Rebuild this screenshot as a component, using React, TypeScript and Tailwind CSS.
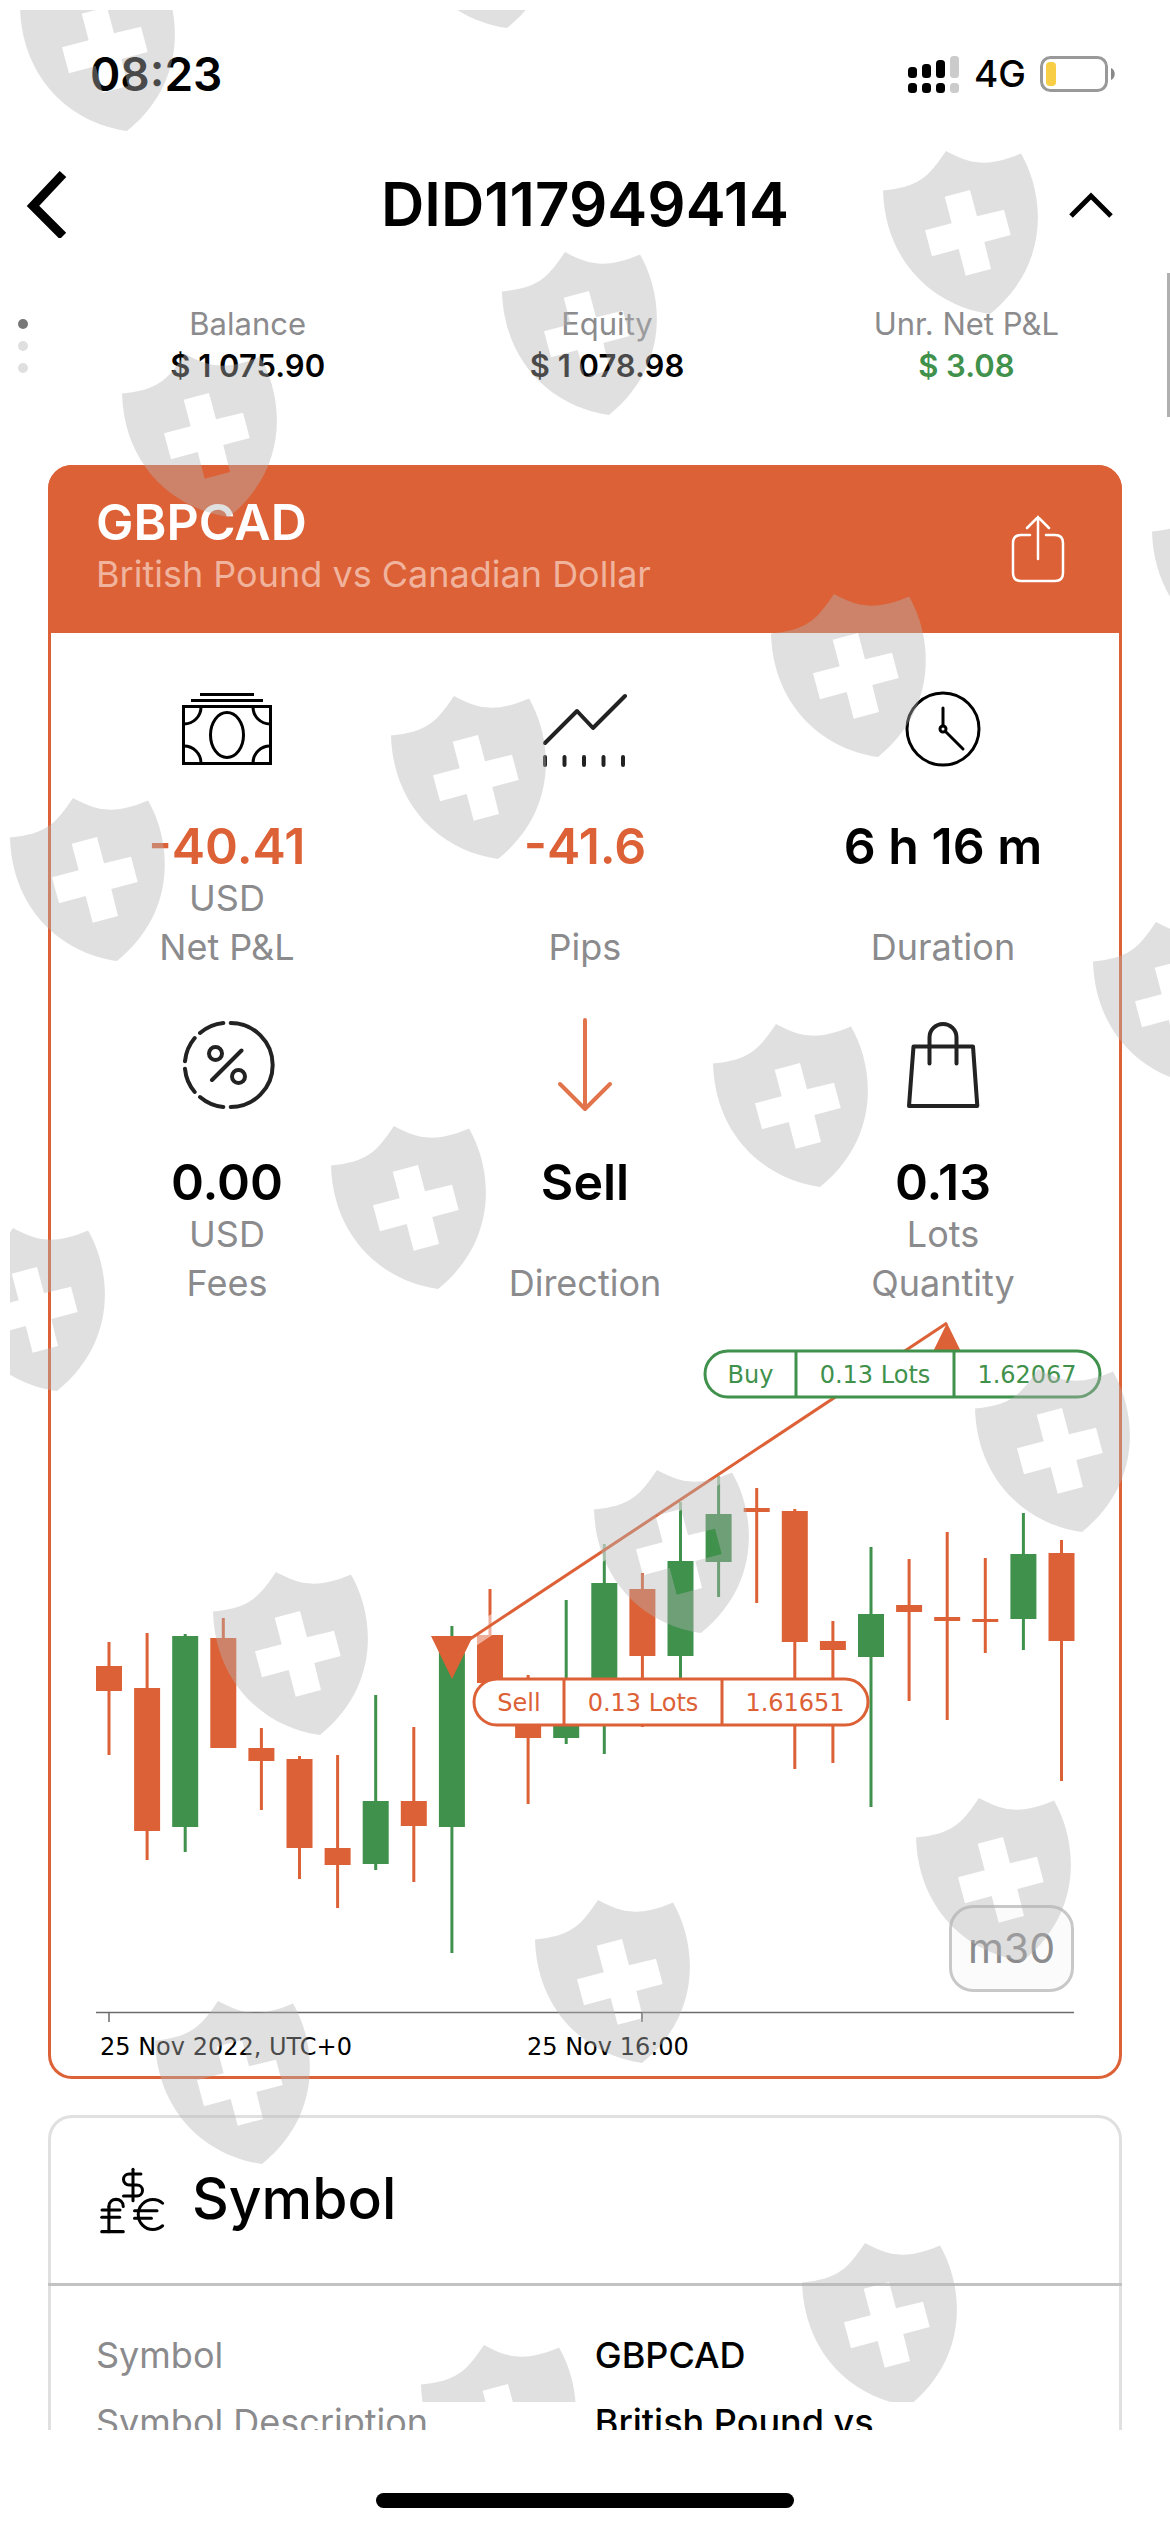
import type { ReactNode } from "react";
import { DollarSign, Euro, PoundSterling } from "lucide-react";

const RED = "#dd6136";
const GREEN = "#3f914c";

const accountFigures = [
  { label: "Balance", value: "$ 1 075.90", color: "text-black" },
  { label: "Equity", value: "$ 1 078.98", color: "text-black" },
  { label: "Unr. Net P&L", value: "$ 3.08", color: "text-[#3f914c]" },
];

// [high, body top, body bottom, low, rising]
const candles: [number, number, number, number, boolean][] = [
  [334, 358, 383, 447, false],
  [325, 380, 523, 552, false],
  [326, 328, 519, 544, true],
  [310, 330, 440, 440, false],
  [420, 440, 453, 502, false],
  [448, 451, 540, 571, false],
  [447, 540, 557, 600, false],
  [387, 493, 556, 562, true],
  [419, 493, 518, 574, false],
  [318, 328, 519, 645, true],
  [281, 327, 375, 375, false],
  [367, 371, 430, 496, false],
  [292, 371, 430, 436, true],
  [236, 275, 390, 446, true],
  [265, 281, 348, 419, false],
  [194, 253, 348, 380, true],
  [168, 206, 254, 289, true],
  [180, 200, 204, 295, false],
  [201, 203, 334, 461, false],
  [313, 333, 342, 455, false],
  [239, 306, 349, 499, true],
  [251, 297, 304, 393, false],
  [224, 309, 313, 412, false],
  [250, 311, 314, 345, false],
  [205, 246, 311, 342, true],
  [232, 245, 333, 473, false],
];

const shields = [
  [400, -135], [20, -32],
  [883, 151], [502, 252], [122, 354],
  [1152, 492], [771, 594], [391, 696], [10, 798],
  [1093, 922], [713, 1024], [331, 1126], [-50, 1228],
  [975, 1369], [594, 1470], [213, 1572],
  [916, 1798], [535, 1900], [155, 2001],
  [802, 2243], [421, 2345],
];

function StatusBar() {
  return (
    <div className="flex h-[140px] items-center justify-between pt-2 pr-[54px] pl-[90px]">
      <span className="text-[46px] font-semibold">08:23</span>
      <div className="flex items-center gap-[14px]">
        <svg width="52" height="38" viewBox="0 0 52 38" aria-hidden="true">
          {[11, 14, 18, 22].map((h, i) => (
            <g key={h} fill={i === 3 ? "#cbcbcb" : "#000"}>
              <rect x={i * 14} y={23 - h} width="9" height={h} rx="3.5" />
              <rect x={i * 14} y="28" width="9" height="10" rx="3.5" />
            </g>
          ))}
        </svg>
        <span className="text-[37px] font-medium">4G</span>
        <svg width="76" height="36" viewBox="0 0 76 36" aria-hidden="true">
          <rect x="1.5" y="1.5" width="65" height="33" rx="9" fill="none" stroke="#999" strokeWidth="3" />
          <rect x="6" y="6" width="10" height="24" rx="4" fill="#f7ce46" />
          <path d="M71 12c5 2 5 10 0 12z" fill="#888" />
        </svg>
      </div>
    </div>
  );
}

function TitleBar() {
  return (
    <header className="flex h-32 items-center justify-between px-6">
      <button type="button" aria-label="Back" className="w-[110px]">
        <svg width="44" height="68" viewBox="0 0 44 68" fill="none" stroke="#000" strokeWidth="9">
          <path d="M39 4 9 36l30 30" />
        </svg>
      </button>
      <h1 className="text-[60px] font-semibold">DID117949414</h1>
      <button type="button" aria-label="Collapse account details" className="flex w-[110px] justify-center">
        <svg width="44" height="28" viewBox="0 0 44 28" fill="none" stroke="#000" strokeWidth="5">
          <path d="M2 26 22 6l20 20" />
        </svg>
      </button>
    </header>
  );
}

function AccountSummary() {
  return (
    <section className="flex pt-[35px] pr-6 pb-[78px] pl-[18px]">
      <div className="flex w-[50px] flex-col gap-3 pt-4">
        <span className="size-[10px] rounded-full bg-[#777]" />
        <span className="size-[10px] rounded-full bg-[#dfdfdf]" />
        <span className="size-[10px] rounded-full bg-[#dfdfdf]" />
      </div>
      <dl className="grid flex-1 grid-cols-3 text-center text-[31px] leading-[42px]">
        {accountFigures.map((f) => (
          <div key={f.label}>
            <dt className="text-[#8b8b8d]">{f.label}</dt>
            <dd className={`font-semibold ${f.color}`}>{f.value}</dd>
          </div>
        ))}
      </dl>
    </section>
  );
}

function StatIcon({ color = "#222", width = 4, children }: { color?: string; width?: number; children: ReactNode }) {
  return (
    <svg
      viewBox="0 0 96 96"
      className="mx-auto mb-[41px] size-24"
      fill="none"
      stroke={color}
      strokeWidth={width}
      strokeLinecap="round"
      strokeLinejoin="round"
      aria-hidden="true"
    >
      {children}
    </svg>
  );
}

type StatProps = { icon: ReactNode; value: string; unit?: string; label: string; loss?: boolean };

function Stat({ icon, value, unit, label, loss }: StatProps) {
  return (
    <div className="text-center text-[36px] leading-[49px] text-[#8b8b8d]">
      {icon}
      <p className={`text-[50px] leading-[56px] font-semibold ${loss ? "text-[#dd6136]" : "text-black"}`}>{value}</p>
      <p className="h-[49px]">{unit}</p>
      <p>{label}</p>
    </div>
  );
}

function Stats() {
  return (
    <div className="grid grid-cols-3 gap-y-[45px] pt-12">
      <Stat
        value="-40.41"
        unit="USD"
        label="Net P&L"
        loss
        icon={
          <StatIcon color="#000" width={3}>
            <rect x="4.5" y="25.5" width="87" height="57" strokeLinejoin="miter" />
            <path strokeLinecap="butt" d="M12 19.5h72M21 13.5h54" />
            <ellipse cx="48" cy="54" rx="16.5" ry="22.5" />
            <path d="M22 26a17 17 0 0 1-17 17M74 26a17 17 0 0 0 17 17M22 82A17 17 0 0 0 5 65M74 82a17 17 0 0 1 17-17" />
          </StatIcon>
        }
      />
      <Stat
        value="-41.6"
        label="Pips"
        loss
        icon={
          <StatIcon>
            <path d="m8 62 32-32 16 17 32-32M8 76v8M27.500 76v8M47 76v8M66.500 76v8M86 76v8" />
          </StatIcon>
        }
      />
      <Stat
        value="6 h 16 m"
        label="Duration"
        icon={
          <StatIcon color="#000" width={3}>
            <circle cx="48" cy="48" r="36" />
            <circle cx="48" cy="48" r="3" />
            <path d="M48 27v17M51 51l17 17" />
          </StatIcon>
        }
      />
      <Stat
        value="0.00"
        unit="USD"
        label="Fees"
        icon={
          <StatIcon>
            <path d="M51.700 6a42 42 0 0 1 0 84M44.300 6A42 42 0 0 0 21 16M15.700 21A42 42 0 0 0 6 44.300M44.300 90A42 42 0 0 1 21 80M15.700 75A42 42 0 0 1 6 51.700M62.500 33.500 33 63" />
            <circle cx="36.500" cy="36.500" r="6.500" />
            <circle cx="59.500" cy="59.500" r="6.500" />
          </StatIcon>
        }
      />
      <Stat
        value="Sell"
        label="Direction"
        icon={
          <StatIcon color="#e2744b">
            <path d="M48 3v89M23 67l25 25 25-25" />
          </StatIcon>
        }
      />
      <Stat
        value="0.13"
        unit="Lots"
        label="Quantity"
        icon={
          <StatIcon>
            <path d="M18.500 29.500H78L82.300 89H14zM34.500 46.500V20.500a13.500 13.500 0 0 1 27 0v26" />
          </StatIcon>
        }
      />
    </div>
  );
}

function OrderTag({ x, y, color, cells }: { x: number; y: number; color: string; cells: [number, string][] }) {
  const width = cells[2][0];
  const starts = [0, cells[0][0], cells[1][0]];
  return (
    <g transform={`translate(${x} ${y})`}>
      <rect width={width} height="46" rx="23" fill="#fff" stroke={color} strokeWidth="3" />
      <path d={`M${cells[0][0]} 0v46M${cells[1][0]} 0v46`} stroke={color} strokeWidth="3" />
      {cells.map(([end, text], i) => (
        <text
          key={text}
          x={(starts[i] + end) / 2}
          y="32"
          textAnchor="middle"
          fill={color}
          className="font-['DejaVu_Sans',sans-serif] text-[24px]"
        >
          {text}
        </text>
      ))}
    </g>
  );
}

function Chart() {
  return (
    <div className="relative">
      <svg viewBox="-3 0 1074 771" className="block w-full" role="img" aria-label="GBPCAD price chart, 30 minutes">
        {candles.map(([high, top, bottom, low, up], i) => {
          const x = 58 + i * 38.1;
          return (
            <g key={i} fill={up ? GREEN : RED}>
              <rect x={x - 1.5} y={high} width="3" height={low - high} />
              <rect x={x - 13} y={top} width="26" height={bottom - top} />
            </g>
          );
        })}
        <path d="M401 343 896 15" stroke="#fff" strokeOpacity="0.5" strokeWidth="18" />
        <path d="M401 343 896 15" stroke={RED} strokeWidth="3" />
        <path d="M380 328h42l-21 43zM896 15l21 43h-42z" fill={RED} />
        <OrderTag x={654} y={43} color={GREEN} cells={[[91, "Buy"], [249, "0.13 Lots"], [395, "1.62067"]]} />
        <OrderTag x={423} y={371} color={RED} cells={[[90, "Sell"], [248, "0.13 Lots"], [394, "1.61651"]]} />
        <path d="M45 704.500h978M58 704v10M591 704v10" fill="none" stroke="#6b6b6b" strokeWidth="1.500" />
        <g className="font-['DejaVu_Sans',sans-serif] text-[24px]">
          <text x="49" y="747">25 Nov 2022, UTC+0</text>
          <text x="476" y="747">25 Nov 16:00</text>
        </g>
      </svg>
      <button
        type="button"
        className="absolute right-12 bottom-[87px] h-[87px] rounded-3xl border-3 border-[#c8c8c8] bg-[#fbfbfb] px-4 text-[41px] text-[#8b8b8d]"
      >
        m30
      </button>
    </div>
  );
}

function PositionCard() {
  return (
    <article className="overflow-hidden rounded-3xl ring-3 ring-[#dd6136] ring-inset">
      <div className="flex items-center justify-between bg-[#dd6136] px-12 pt-[30px] pb-[35px] text-white">
        <div>
          <h2 className="text-[50px] leading-[55px] font-semibold">GBPCAD</h2>
          <p className="text-[36px] leading-[48px] text-[#f0b39d]">British Pound vs Canadian Dollar</p>
        </div>
        <button type="button" aria-label="Share" className="mr-2">
          <svg width="56" height="72" viewBox="0 0 56 72" fill="none" stroke="#fff" strokeWidth="2.5" strokeLinecap="round">
            <path d="M20 24h-9q-8 0-8 8v30q0 8 8 8h34q8 0 8-8V32q0-8-8-8h-9M28 48V6M17 17 28 6l11 11" />
          </svg>
        </button>
      </div>
      <Stats />
      <Chart />
    </article>
  );
}

function SymbolCard() {
  return (
    <article className="rounded-t-3xl border-3 border-b-0 border-[#e0e0e0]">
      <h2 className="-mx-[3px] flex h-[168px] items-center gap-6 border-b-3 border-[#c2c2c2] px-12 pb-1 text-[57px] font-medium">
        <svg width="72" height="72" viewBox="0 0 72 72" aria-hidden="true">
          <DollarSign x="18" y="3" size={38} strokeWidth={1.9} />
          <PoundSterling x="-5" y="31" size={43} strokeWidth={1.7} />
          <path d="M6 47h18" stroke="currentColor" strokeWidth="3" strokeLinecap="round" />
          <Euro x="31" y="29" size={45} strokeWidth={1.6} />
        </svg>
        Symbol
      </h2>
      <dl className="grid grid-cols-[306fr_294fr] gap-y-[18px] pt-[45px] pr-[45px] pl-[45px] text-[36px] leading-[49px]">
        <dt className="text-[#8b8b8d]">Symbol</dt>
        <dd className="font-medium">GBPCAD</dd>
        <dt className="text-[#8b8b8d]">Symbol Description</dt>
        <dd className="pr-24 font-medium">British Pound vs Canadian Dollar</dd>
      </dl>
    </article>
  );
}

function Watermark() {
  return (
    <div className="pointer-events-none absolute inset-0 overflow-hidden" aria-hidden="true">
      <svg width="1170" height="2402" className="block">
        <clipPath id="watermark-area">
          <rect x="10" y="10" width="1160" height="2392" />
        </clipPath>
        <g clipPath="url(#watermark-area)" fill="#b4b4b4" fillOpacity="0.41" fillRule="evenodd">
          {shields.map(([x, y]) => (
            <path
              key={`${x},${y}`}
              transform={`translate(${x} ${y})`}
              d="M0 39.500C35 36 45 27 63 0C82 10 100 19 138 2.500C160 40 170 112 107 163C50 155 2 110 0 39.500zM61.700 45.700 87 39l7 26.300 27-6.600 6.700 25.300-26.400 7 6.700 27-25.300 6.700-7-26.700L49 105.300 42 79.300l26.700-7z"
            />
          ))}
        </g>
      </svg>
    </div>
  );
}

export default function App() {
  return (
    <div className="relative flex h-screen flex-col overflow-hidden bg-white font-[Inter,sans-serif] text-black">
      <StatusBar />
      <TitleBar />
      <main className="relative min-h-0 flex-1 overflow-hidden">
        <AccountSummary />
        <div className="flex flex-col gap-9 px-12">
          <PositionCard />
          <SymbolCard />
        </div>
        <span className="absolute top-[5px] right-0 h-36 w-[3px] bg-[#b0b0b0]" />
      </main>
      <footer className="flex h-[102px] items-end justify-center pb-6">
        <span className="h-[15px] w-[418px] rounded-full bg-black" />
      </footer>
      <Watermark />
    </div>
  );
}
